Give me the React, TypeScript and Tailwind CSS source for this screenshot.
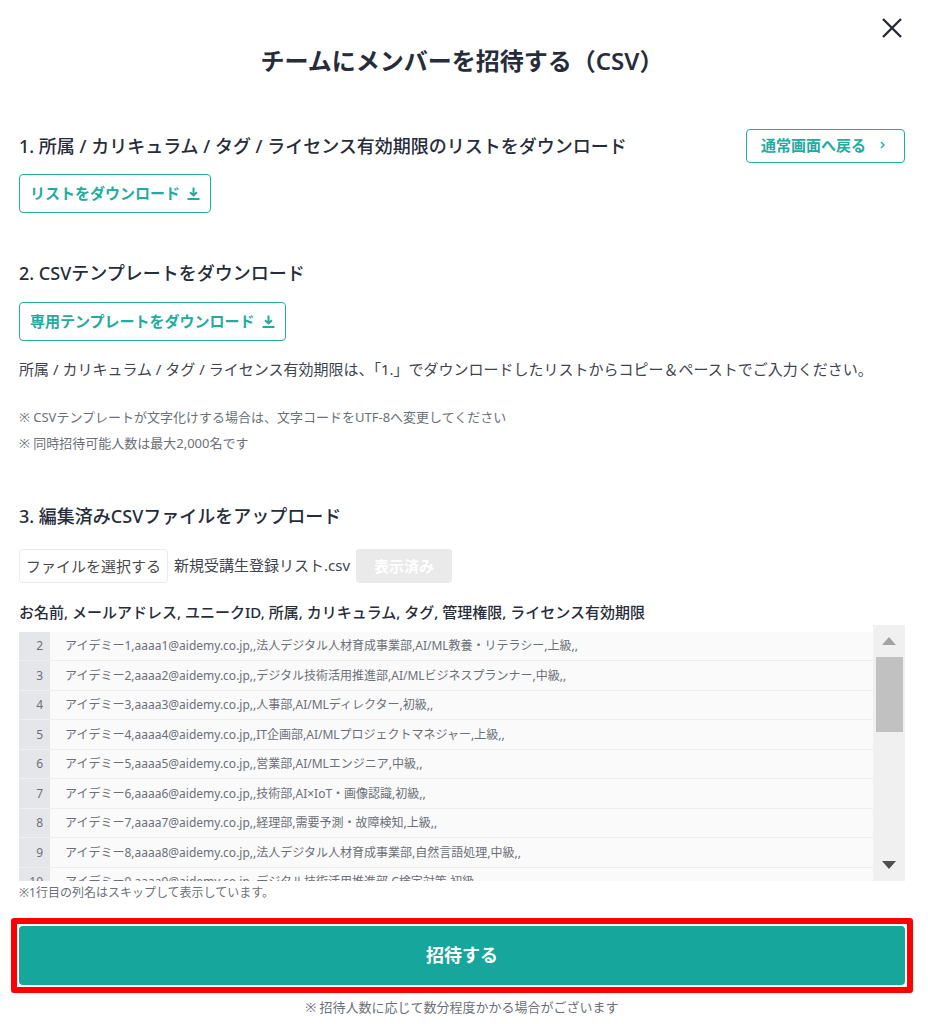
import React from 'react';

const rows = [
  { line: 2, text: 'アイデミー1,aaaa1@aidemy.co.jp,,法人デジタル人材育成事業部,AI/ML教養・リテラシー,上級,,' },
  { line: 3, text: 'アイデミー2,aaaa2@aidemy.co.jp,,デジタル技術活用推進部,AI/MLビジネスプランナー,中級,,' },
  { line: 4, text: 'アイデミー3,aaaa3@aidemy.co.jp,,人事部,AI/MLディレクター,初級,,' },
  { line: 5, text: 'アイデミー4,aaaa4@aidemy.co.jp,,IT企画部,AI/MLプロジェクトマネジャー,上級,,' },
  { line: 6, text: 'アイデミー5,aaaa5@aidemy.co.jp,,営業部,AI/MLエンジニア,中級,,' },
  { line: 7, text: 'アイデミー6,aaaa6@aidemy.co.jp,,技術部,AI×IoT・画像認識,初級,,' },
  { line: 8, text: 'アイデミー7,aaaa7@aidemy.co.jp,,経理部,需要予測・故障検知,上級,,' },
  { line: 9, text: 'アイデミー8,aaaa8@aidemy.co.jp,,法人デジタル人材育成事業部,自然言語処理,中級,,' },
  { line: 10, text: 'アイデミー9,aaaa9@aidemy.co.jp,,デジタル技術活用推進部,C検定対策,初級' },
];

function DownloadIcon() {
  return (
    <svg className="w-[13px] h-[15px]" viewBox="0 0 13 15" fill="none" stroke="currentColor" strokeWidth="2" aria-hidden="true">
      <path d="M6.5 1.5v8M3 6.2l3.5 3.3L10 6.2M.5 13h12" />
    </svg>
  );
}

function DownloadButton({ label }: { label: string }) {
  return (
    <button
      type="button"
      className="flex items-center gap-[7px] h-[39px] px-[10px] border border-[#22ab9f] rounded text-[15px] font-bold text-[#22ab9f]"
    >
      {label}
      <DownloadIcon />
    </button>
  );
}

function PreviewTable() {
  return (
    <div className="flex h-64">
      <div className="flex-1 min-w-0 pt-[7px] overflow-hidden">
        <table className="w-full border-separate border-spacing-0 text-xs text-[#6b6f78]">
          <tbody>
            {rows.map((row) => (
              <tr key={row.line} className="odd:h-[29px] even:h-[30px]">
                <th scope="row" className="w-[31px] p-0 pr-[7px] text-right font-normal bg-[#e5e6ea] border-b border-[#eeeff1]">
                  {row.line}
                </th>
                <td className="p-0 pl-[15px] whitespace-nowrap bg-[#fafafa] border-b border-[#eeeeee]">{row.text}</td>
              </tr>
            ))}
          </tbody>
        </table>
      </div>
      <div className="w-8 flex flex-col items-center bg-[#f0f0f0]">
        <button type="button" aria-label="上へスクロール" className="h-8 w-8 flex items-center justify-center">
          <svg className="w-[14px] h-2 fill-[#a3a3a3]" viewBox="0 0 14 8">
            <path d="M7 0l7 8H0z" />
          </svg>
        </button>
        <div className="w-[27px] h-[75px] bg-[#c1c1c1]" />
        <button type="button" aria-label="下へスクロール" className="mt-auto h-8 w-8 flex items-center justify-center">
          <svg className="w-[14px] h-2 fill-[#505050]" viewBox="0 0 14 8">
            <path d="M0 0h14L7 8z" />
          </svg>
        </button>
      </div>
    </div>
  );
}

export default function App() {
  return (
    <main className="pl-[19px] pr-[23px] bg-white text-[#272c3a] font-['Noto_Sans','Noto_Sans_CJK_JP',sans-serif]">
      <header className="pt-[15px]">
        <div className="flex justify-end">
          <button type="button" aria-label="閉じる" className="w-[26px] h-[26px] flex items-center justify-center">
            <svg className="w-5 h-5" viewBox="0 0 20 20" fill="none" stroke="currentColor" strokeWidth="2.4">
              <path d="M1 1l18 18M19 1L1 19" />
            </svg>
          </button>
        </div>
        <h1 className="mt-1 text-2xl leading-8 font-semibold text-center">チームにメンバーを招待する（CSV）</h1>
      </header>

      <section className="mt-[52px]">
        <div className="flex items-center justify-between">
          <h2 className="text-lg leading-7 font-medium">1. 所属 / カリキュラム / タグ / ライセンス有効期限のリストをダウンロード</h2>
          <a
            href="#"
            className="flex items-center gap-[14px] h-[34px] pl-[14px] pr-[19px] pb-0.5 border border-[#22ab9f] rounded text-[15px] font-bold text-[#22ab9f]"
          >
            通常画面へ戻る
            <svg className="w-[5px] h-2" viewBox="0 0 5 8" fill="none" stroke="currentColor" strokeWidth="1.4">
              <path d="M1 1l3 3-3 3" />
            </svg>
          </a>
        </div>
        <div className="mt-[11px] flex">
          <DownloadButton label="リストをダウンロード" />
        </div>
      </section>

      <section className="mt-[46px]">
        <h2 className="text-lg leading-7 font-medium">2. CSVテンプレートをダウンロード</h2>
        <div className="mt-[15px] flex">
          <DownloadButton label="専用テンプレートをダウンロード" />
        </div>
        <p className="mt-4 text-[15px] leading-6 text-[#3f434f]">
          所属 / カリキュラム / タグ / ライセンス有効期限は、「1.」でダウンロードしたリストからコピー＆ペーストでご入力ください。
        </p>
        <div className="mt-[23px] text-[13px] leading-[26px] text-[#6b6f78]">
          <p>※ CSVテンプレートが文字化けする場合は、文字コードをUTF-8へ変更してください</p>
          <p>※ 同時招待可能人数は最大2,000名です</p>
        </div>
      </section>

      <section className="mt-[46px]">
        <h2 className="text-lg leading-7 font-medium">3. 編集済みCSVファイルをアップロード</h2>
        <div className="mt-[19px] flex items-center gap-1.5 text-[15px]">
          <label className="h-[34px] px-1.5 flex items-center border border-[#ebebeb] rounded text-[#4a4a4a] cursor-pointer">
            ファイルを選択する
            <input type="file" accept=".csv" className="hidden" />
          </label>
          <span className="pb-0.5 text-[#3f434f]">新規受講生登録リスト.csv</span>
          <button type="button" disabled className="h-[34px] px-[18px] rounded bg-[#eaeaea] font-bold text-white">
            表示済み
          </button>
        </div>
        <p className="mt-4 text-[15px] leading-[26px] font-medium">
          お名前, メールアドレス, ユニークID, 所属, カリキュラム, タグ, 管理権限, ライセンス有効期限
        </p>
        <PreviewTable />
        <p className="text-xs leading-6 text-[#6b6f78]">※1行目の列名はスキップして表示しています。</p>
      </section>

      <div className="-mx-2 mt-[13px] p-0.5 border-[6px] border-[#ff0000] rounded-[3px]">
        <button type="submit" className="w-full h-[59px] pb-0.5 rounded bg-[#16a69b] text-lg font-bold text-white">
          招待する
        </button>
      </div>
      <p className="mt-0.5 text-[13px] leading-6 text-center text-[#6b6f78]">
        ※ 招待人数に応じて数分程度かかる場合がございます
      </p>
    </main>
  );
}
